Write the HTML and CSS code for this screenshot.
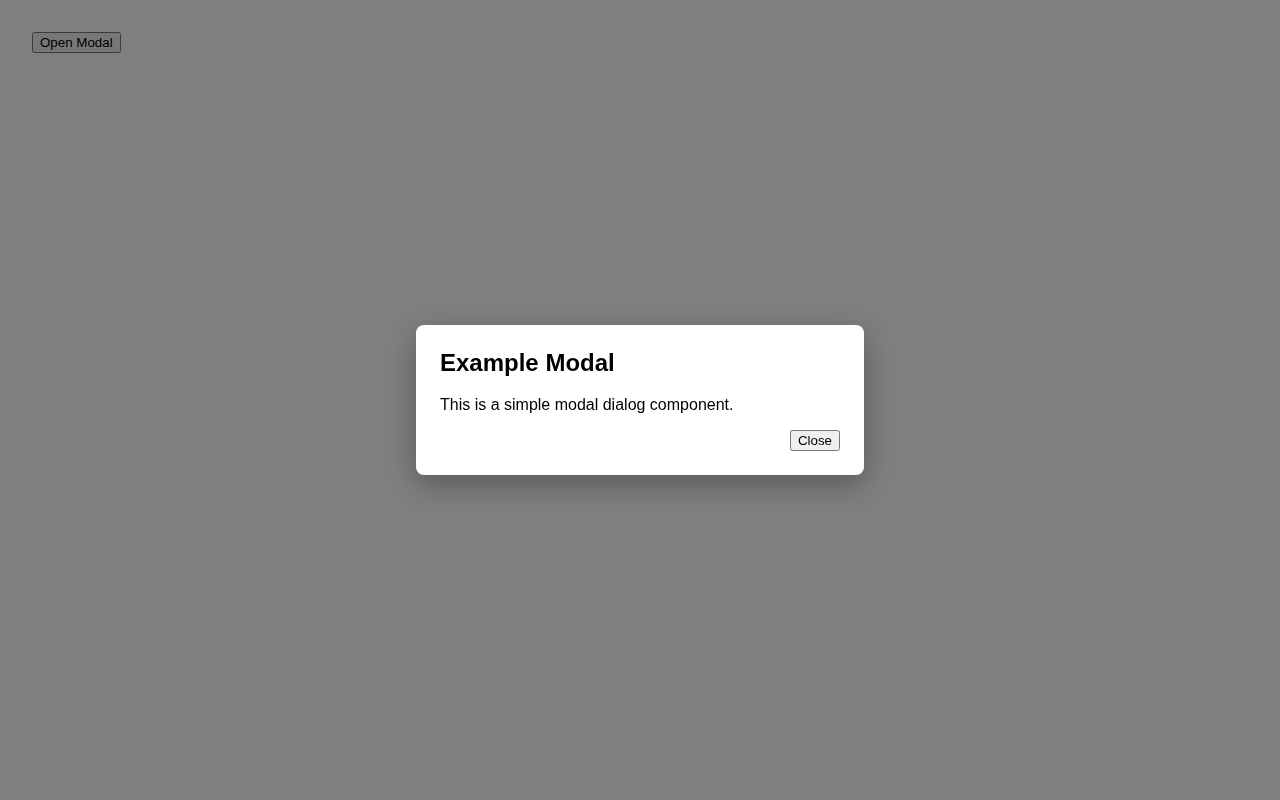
FILE: index.html
```html
<!DOCTYPE html>
<html>
<head>
<meta charset="utf-8">
<link rel="stylesheet" href="styles.css">
</head>
<body>
<div class="page">
  <button class="btn">Open Modal</button>
</div>
<div class="overlay">
  <div class="modal">
    <h2 class="modal-title">Example Modal</h2>
    <p class="modal-text">This is a simple modal dialog component.</p>
    <div class="modal-actions">
      <button class="btn">Close</button>
    </div>
  </div>
</div>
</body>
</html>
```
FILE: styles.css
```css
html, body {
  margin: 0;
  padding: 0;
  background: #ffffff;
  font-family: "Liberation Sans", Arial, sans-serif;
}
.page {
  padding: 32px;
}
.btn {
  font-family: "Liberation Sans", Arial, sans-serif;
  font-size: 13.333px;
  margin: 0;
}
.overlay {
  position: fixed;
  inset: 0;
  background: rgba(0, 0, 0, 0.5);
  display: flex;
  align-items: center;
  justify-content: center;
}
.modal {
  width: 448px;
  box-sizing: border-box;
  background: #ffffff;
  border-radius: 8px;
  padding: 24px;
  box-shadow: 0 10px 30px rgba(0, 0, 0, 0.3);
  color: #000;
}
.modal-title {
  margin: 0;
  font-size: 24px;
  line-height: 28px;
  font-weight: bold;
}
.modal-text {
  margin: 16px 0 0;
  font-size: 16px;
  line-height: 24px;
}
.modal-actions {
  margin-top: 13px;
  display: flex;
  justify-content: flex-end;
}
```
